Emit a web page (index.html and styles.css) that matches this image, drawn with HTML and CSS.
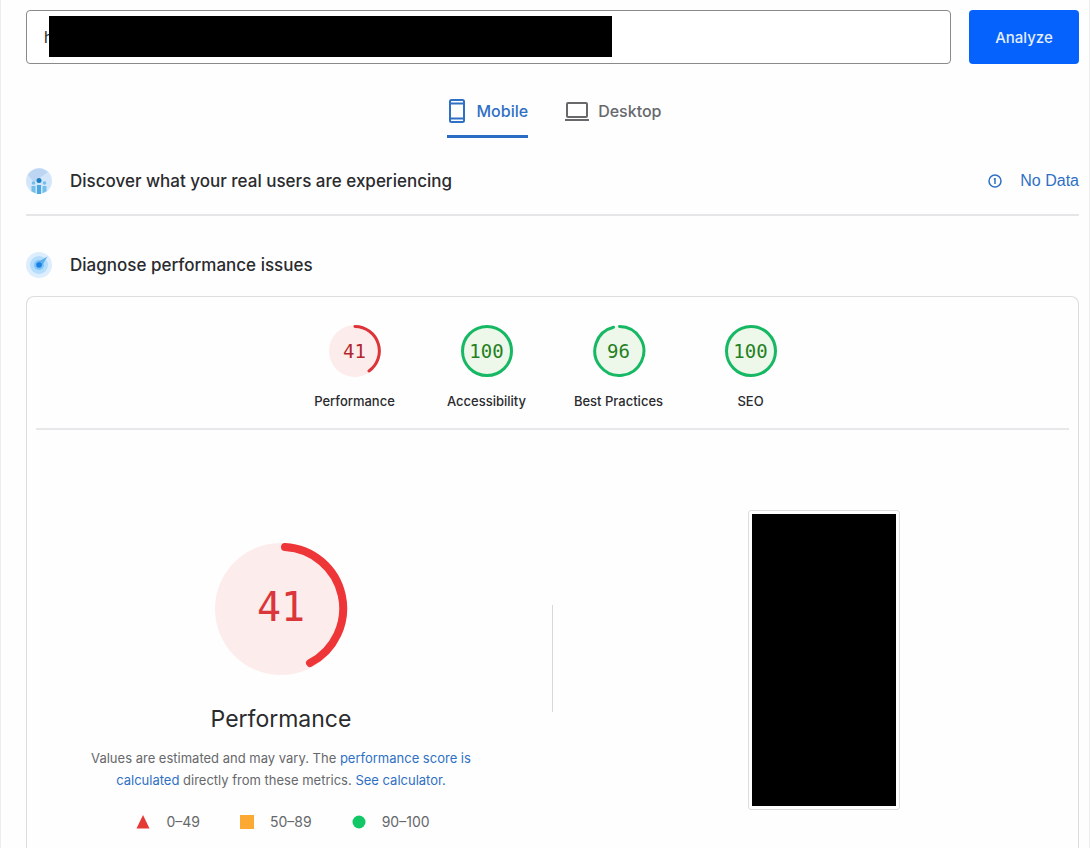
FILE: index.html
```html
<!DOCTYPE html>
<html lang="en">

<head>
    <meta charset="UTF-8">
    <meta name="viewport" content="width=device-width, initial-scale=1.0">
    <link rel="stylesheet" href="styles.css">
    <title>PageSpeed Insights</title>
</head>

<body>
    <main>
        <form class="search">
            <div class="url">
                <input type="text" name="url" value="h" aria-label="Web page URL">
                <span class="redacted"></span>
            </div>
            <button type="button" class="analyze">Analyze</button>
        </form>

        <nav class="tabs">
            <button type="button" class="tab active">
                <svg width="20" height="26" viewBox="0 0 20 26" fill="none" stroke="currentColor" stroke-width="2">
                    <rect x="3" y="2" width="14" height="22" rx="1.5" />
                    <path d="M3 5.5h14M3 20.5h14" />
                </svg>
                Mobile
            </button>
            <button type="button" class="tab">
                <svg width="26" height="26" viewBox="0 0 26 26" fill="none" stroke="currentColor" stroke-width="2">
                    <rect x="3" y="5" width="20" height="14" rx="1" />
                    <path d="M1 22h24" />
                </svg>
                Desktop
            </button>
        </nav>

        <section class="row">
            <svg width="26" height="28" viewBox="0 0 26 28">
                <circle cx="13" cy="14" r="13" fill="#d3e6fa" />
                <path d="M2 8A13 13 0 0 1 22 5L8 15z" fill="#bcd5f2" />
                <g fill="#73bfea">
                    <circle cx="7.5" cy="16" r="1.8" />
                    <circle cx="18.5" cy="16" r="1.8" />
                    <path d="M5.5 19h4v7.3l-4-2zM16.5 19h4v5.3l-4 2z" />
                </g>
                <path d="M11 18h4v9h-4z" fill="#48a9e6" />
                <circle cx="13" cy="13.5" r="2.5" fill="#1b7fc4" />
            </svg>
            <h2>Discover what your real users are experiencing</h2>
            <a href="#" class="nodata">
                <svg width="14" height="14" viewBox="0 0 14 14" fill="none" stroke="currentColor" stroke-width="1.5">
                    <circle cx="7" cy="7" r="6" />
                    <path d="M7 4v6M7 5H5.8" />
                </svg>
                No Data
            </a>
        </section>

        <section class="row diagnose">
            <svg width="26" height="28" viewBox="0 0 26 28">
                <circle cx="13" cy="14" r="13" fill="#dcedfd" />
                <circle cx="13" cy="14" r="9" fill="#b4dcfb" />
                <circle cx="13" cy="14" r="5" fill="#7fc4f8" />
                <path d="M10.5 12L21.5 5.5 15 16z" fill="#5aaef0" />
                <circle cx="13" cy="14" r="2.8" fill="#1a80e5" />
            </svg>
            <h2>Diagnose performance issues</h2>
        </section>

        <div class="card">
            <div class="gauges">
                <a href="#performance" class="gauge fail">
                    <span class="dial">
                        <svg viewBox="0 0 54 54">
                            <circle class="disc" cx="27" cy="27" r="26" />
                            <path class="arc" d="M27 2.5A24.5 24.5 0 0 1 41 47" />
                        </svg>
                        <b>41</b>
                    </span>
                    Performance
                </a>
                <a href="#accessibility" class="gauge pass">
                    <span class="dial">
                        <svg viewBox="0 0 54 54">
                            <circle class="disc" cx="27" cy="27" r="25" />
                            <circle class="arc" cx="27" cy="27" r="24.5" />
                        </svg>
                        <b>100</b>
                    </span>
                    Accessibility
                </a>
                <a href="#best-practices" class="gauge pass">
                    <span class="dial">
                        <svg viewBox="0 0 54 54">
                            <circle class="disc" cx="27" cy="27" r="25" />
                            <path class="arc" d="M27.5 2.5A24.5 24.5 0 1 1 21.5 3.2" />
                        </svg>
                        <b>96</b>
                    </span>
                    Best Practices
                </a>
                <a href="#seo" class="gauge pass">
                    <span class="dial">
                        <svg viewBox="0 0 54 54">
                            <circle class="disc" cx="27" cy="27" r="25" />
                            <circle class="arc" cx="27" cy="27" r="24.5" />
                        </svg>
                        <b>100</b>
                    </span>
                    SEO
                </a>
            </div>

            <div class="category" id="performance">
                <div class="score">
                    <div class="dial big fail">
                        <svg viewBox="0 0 134 134">
                            <circle class="disc" cx="67" cy="67" r="66" />
                            <path class="arc" d="M71 5A61.5 61.5 0 0 1 96 121" />
                        </svg>
                        <b>41</b>
                    </div>
                    <h1>Performance</h1>
                    <p>Values are estimated and may vary. The <a href="#">performance score is calculated</a> directly
                        from these metrics. <a href="#">See calculator.</a></p>
                    <ul class="scale">
                        <li>
                            <svg width="14" height="14" viewBox="0 0 14 14"><path d="M7 0l6.5 13.5H.5z" fill="#e53935" /></svg>
                            0–49
                        </li>
                        <li>
                            <svg width="14" height="14" viewBox="0 0 14 14"><path d="M0 0h14v14H0z" fill="#fba933" /></svg>
                            50–89
                        </li>
                        <li>
                            <svg width="14" height="14" viewBox="0 0 14 14"><circle cx="7" cy="7" r="6.5" fill="#12c766" /></svg>
                            90–100
                        </li>
                    </ul>
                </div>
                <div class="divider"></div>
                <div class="screenshot"></div>
            </div>
        </div>
    </main>
</body>

</html>
```
FILE: styles.css
```css
* {
    margin: 0;
    padding: 0;
    box-sizing: border-box;
}

body {
    background: #fefefe;
    color: #2a2b2e;
    font-family: Inter, Roboto, sans-serif;
    font-size: 14px;
}

main {
    min-height: 100vh;
    display: flex;
    flex-direction: column;
    padding: 10px 10px 0 25px;
    border: 1px solid #ededed;
    border-width: 0 1px;
}

a {
    color: #2f70c4;
    text-decoration: none;
}

button {
    font: inherit;
    border: none;
    cursor: pointer;
}

/* url bar */
.search {
    display: flex;
    gap: 18px;
    height: 54px;
}

.url {
    position: relative;
    flex: 1;
}

.url input {
    width: 100%;
    height: 100%;
    padding: 0 17px;
    border: 1px solid #8a8a8a;
    border-radius: 4px;
    background: #fff;
    font: 16px Roboto, sans-serif;
    color: #333;
}

.redacted {
    position: absolute;
    left: 23px;
    top: 6px;
    width: 563px;
    height: 41px;
    background: #000;
}

.analyze {
    width: 110px;
    border-radius: 4px;
    background: #0562fc;
    color: #e4eeff;
    font-size: 15px;
    font-weight: 500;
}

/* tabs */
.tabs {
    display: flex;
    justify-content: center;
    gap: 36px;
    margin-top: 22px;
    padding-left: 3px;
}

.tab {
    display: flex;
    align-items: center;
    gap: 10px;
    height: 52px;
    border-bottom: 3px solid transparent;
    background: none;
    color: #66686c;
    font-size: 16px;
    font-weight: 500;
}

.tab + .tab {
    gap: 8px;
}

.tab.active {
    color: #2f70c4;
    border-color: #2a6cc4;
}

/* section titles */
.row {
    display: flex;
    align-items: center;
    height: 78px;
    padding-top: 10px;
    border-bottom: 2px solid #e6e6e8;
}

.row h2 {
    margin-left: 18px;
    font-size: 17px;
    font-weight: 500;
}

.row.diagnose {
    height: 80px;
    padding-top: 18px;
    border: none;
}

.nodata {
    display: flex;
    align-items: center;
    gap: 18px;
    margin-left: auto;
    font: 16px "Liberation Sans", sans-serif;
}

/* report */
.card {
    flex: 1;
    padding: 0 9px;
    border: 1px solid #dddde0;
    border-bottom: none;
    border-radius: 8px 8px 0 0;
}

.gauges {
    display: flex;
    justify-content: center;
    padding: 27px 0 18px;
    border-bottom: 2px solid #e8e8ea;
}

.gauge {
    display: flex;
    flex-direction: column;
    align-items: center;
    gap: 14px;
    width: 132px;
    color: #2a2b2e;
    font-size: 13px;
    font-weight: 500;
    line-height: 18px;
}

.dial {
    position: relative;
    display: grid;
    place-items: center;
    width: 54px;
    height: 54px;
}

.dial svg {
    position: absolute;
    inset: 0;
}

.dial b {
    position: relative;
    font: 19px "DejaVu Sans Mono", monospace;
}

.arc {
    fill: none;
    stroke-width: 3;
    stroke-linecap: round;
}

.fail .disc {
    fill: #fdecec;
}

.fail .arc {
    stroke: #dc3438;
}

.fail b {
    color: #b3262e;
}

.pass .disc {
    fill: #edf8ea;
}

.pass .arc {
    stroke: #16b864;
}

.pass b {
    color: #25801f;
}

.category {
    display: grid;
    grid-template-columns: 1fr 1px 1fr;
    column-gap: 26px;
    align-items: start;
    justify-items: center;
    padding-top: 80px;
}

.score {
    display: flex;
    flex-direction: column;
    align-items: center;
    padding-top: 32px;
}

.big {
    width: 134px;
    height: 134px;
}

.big .arc {
    stroke: #ee3538;
    stroke-width: 8;
}

.big b {
    padding-bottom: 4px;
    color: #db3639;
    font-size: 40px;
}

.score h1 {
    margin-top: 27px;
    font-size: 23px;
    font-weight: 400;
    line-height: 32px;
}

.score p {
    max-width: 400px;
    margin-top: 12px;
    color: #66686b;
    font-size: 13px;
    line-height: 22px;
    text-align: center;
}

.scale {
    display: flex;
    gap: 40px;
    margin-top: 20px;
    padding-left: 4px;
    color: #66686b;
    list-style: none;
}

.scale li {
    display: flex;
    align-items: center;
    gap: 16px;
    line-height: 22px;
}

.divider {
    width: 1px;
    height: 107px;
    margin-top: 95px;
    background: #d8d8da;
}

.screenshot {
    width: 152px;
    height: 300px;
    border: 1px solid #dddde0;
    border-radius: 3px;
    padding: 3px;
    background: #000 content-box;
}
```
